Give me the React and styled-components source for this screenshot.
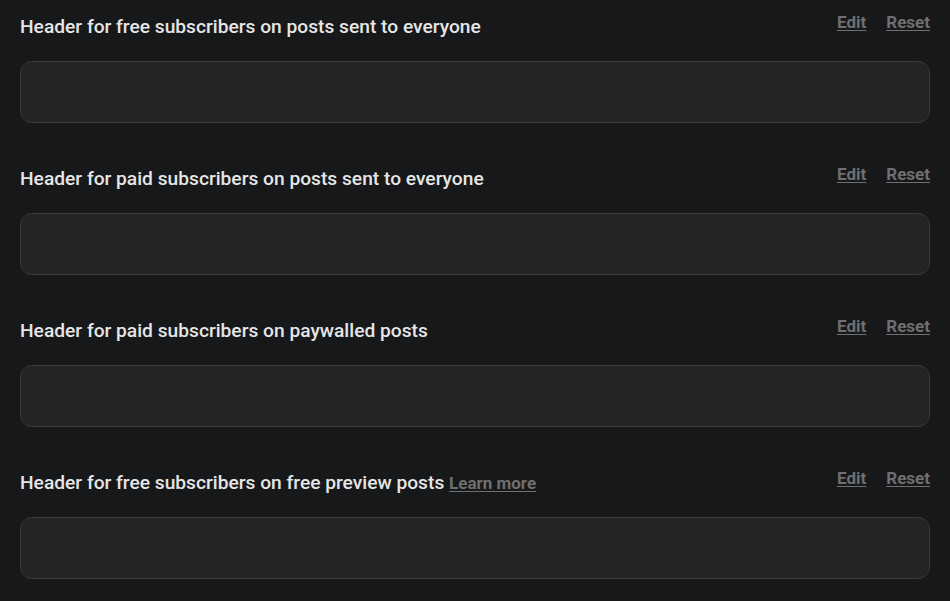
import React from "react";
import styled, { createGlobalStyle } from "styled-components";

const Global = createGlobalStyle`
  html, body { margin: 0; padding: 0; background: #17181a; }
  body { font-family: Roboto, "Liberation Sans", sans-serif; }
`;

const Page = styled.div`
  padding: 12px 20px 0;
  display: flex;
  flex-direction: column;
  gap: 41px;
  min-height: 601px;
  box-sizing: border-box;
  background: #17181a;
`;

const Section = styled.section`
  display: flex;
  flex-direction: column;
  gap: 23px;
`;

const HeaderRow = styled.div`
  display: flex;
  justify-content: space-between;
  align-items: flex-start;
  height: 26px;
`;

const Title = styled.div`
  padding-top: 3px;
  font-size: 19.2px;
  line-height: 23px;
  font-weight: 500;
  color: #e6e6e6;
  white-space: nowrap;
`;

const InlineLink = styled.a`
  font-size: 17px;
  line-height: 20px;
  font-weight: 700;
  color: #6e6f70;
  text-decoration: underline;
  text-underline-offset: 2px;
  cursor: pointer;
`;

const Actions = styled.div`
  display: flex;
  gap: 20px;
  line-height: 20px;
`;

const Box = styled.div`
  height: 62px;
  box-sizing: border-box;
  border: 1px solid #393b3a;
  border-radius: 12px;
  background: #232524;
`;

const items = [
  { title: "Header for free subscribers on posts sent to everyone" },
  { title: "Header for paid subscribers on posts sent to everyone" },
  { title: "Header for paid subscribers on paywalled posts" },
  { title: "Header for free subscribers on free preview posts", learn: true },
];

export default function App() {
  return (
    <>
      <Global />
      <Page>
        {items.map((it) => (
          <Section key={it.title}>
            <HeaderRow>
              <Title>
                {it.title}
                {it.learn && (
                  <>
                    {" "}
                    <InlineLink>Learn more</InlineLink>
                  </>
                )}
              </Title>
              <Actions>
                <InlineLink>Edit</InlineLink>
                <InlineLink>Reset</InlineLink>
              </Actions>
            </HeaderRow>
            <Box />
          </Section>
        ))}
      </Page>
    </>
  );
}
